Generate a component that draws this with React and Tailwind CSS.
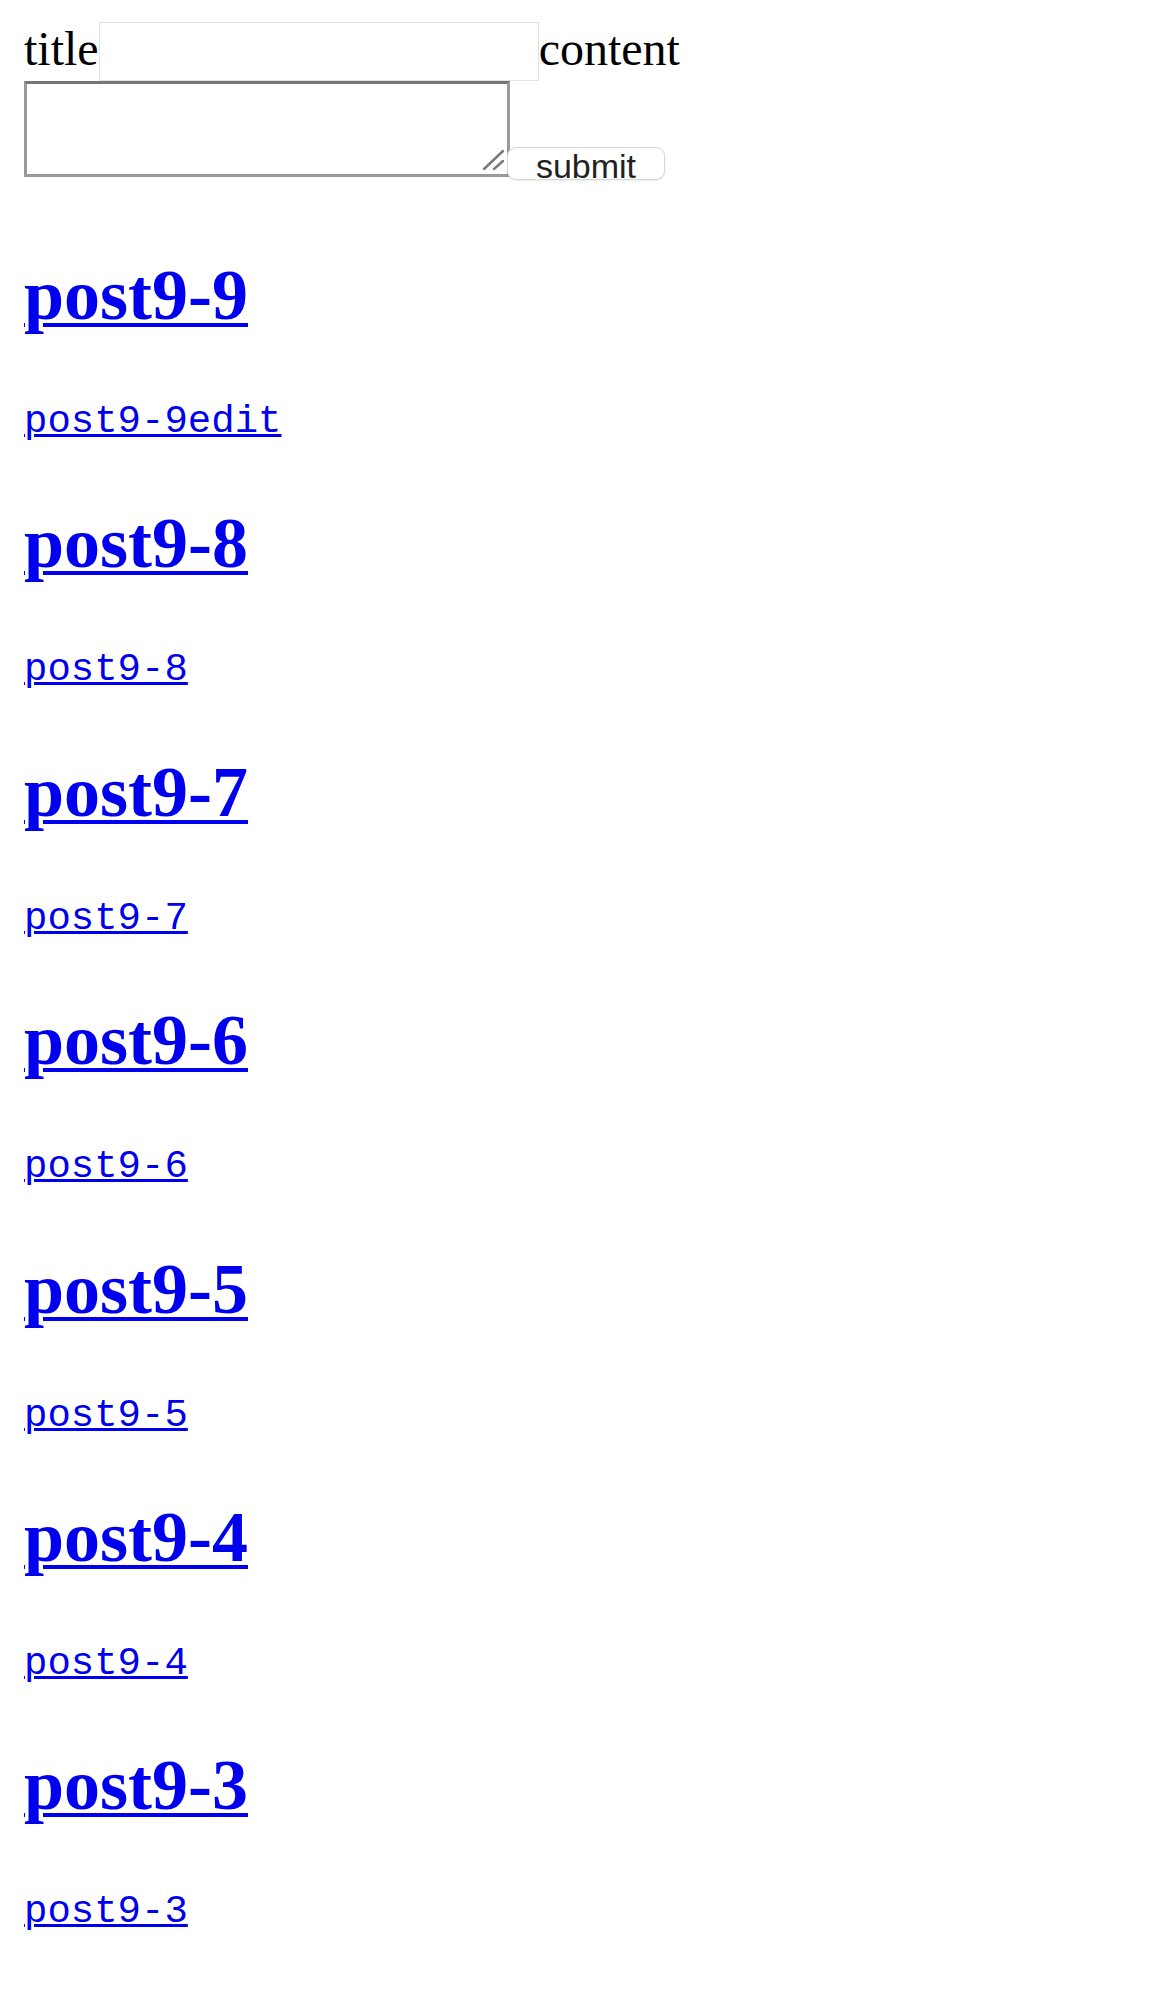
import React from 'react';

// --- Posts shown under the form ---

const posts = [
    { title: "post9-9", link: "post9-9edit" },
    { title: "post9-8", link: "post9-8" },
    { title: "post9-7", link: "post9-7" },
    { title: "post9-6", link: "post9-6" },
    { title: "post9-5", link: "post9-5" },
    { title: "post9-4", link: "post9-4" },
    { title: "post9-3", link: "post9-3" },
];

const PostForm = () => (
    <form className="pl-[24px] pt-[22px]">
        <div className="flex items-start h-[59px]">
            <span className="text-[48px] leading-[54px]">title</span>
            <input
                type="text"
                className="w-[440px] h-[59px] bg-white border border-[#e2e2e2] outline-none"
            />
            <span className="text-[48px] leading-[54px]">content</span>
        </div>
        <div className="flex items-start">
            <div className="relative">
                <textarea className="block w-[486px] h-[96px] bg-white border-[3px] border-[#9a9a9a] border-t-[#767676] resize-none outline-none" />
                {/* resize grip */}
                <svg className="absolute left-0 top-0 pointer-events-none" width="486" height="96">
                    <line x1="460" y1="88" x2="479" y2="70" stroke="#7a7a7a" strokeWidth="2.5" strokeLinecap="round" />
                    <line x1="470" y1="88" x2="479" y2="80" stroke="#7a7a7a" strokeWidth="2.5" strokeLinecap="round" />
                </svg>
            </div>
            <button
                type="button"
                className="relative mt-[66px] -ml-[3px] w-[158px] h-[33px] pt-[3px] bg-white border border-[#d6d6d6] rounded-[9px] shadow-[0_1px_2px_rgba(0,0,0,0.08)] font-['Liberation_Sans',sans-serif] text-[34px] leading-[30px] text-[#222] text-center"
            >
                submit
            </button>
        </div>
    </form>
);

const PostList = () => (
    <div className="pl-[24px] mt-[75px] flex flex-col gap-[59.4px]">
        {posts.map((post) => (
            <div key={post.title}>
                <h1 className="text-[72px] leading-[80px] font-bold">
                    <a href="#" className="text-[#0000ee] underline decoration-[4px] underline-offset-[4px]">{post.title}</a>
                </h1>
                <p className="mt-[65px] font-['Liberation_Mono',monospace] text-[39px] leading-[44px]">
                    <a href="#" className="text-[#0000ee] underline decoration-[3px] underline-offset-[2px]">{post.link}</a>
                </p>
            </div>
        ))}
    </div>
);

export default function App() {
    return (
        <div className="min-h-screen bg-white text-black font-['Liberation_Serif',serif]">
            <PostForm />
            <PostList />
        </div>
    );
}
